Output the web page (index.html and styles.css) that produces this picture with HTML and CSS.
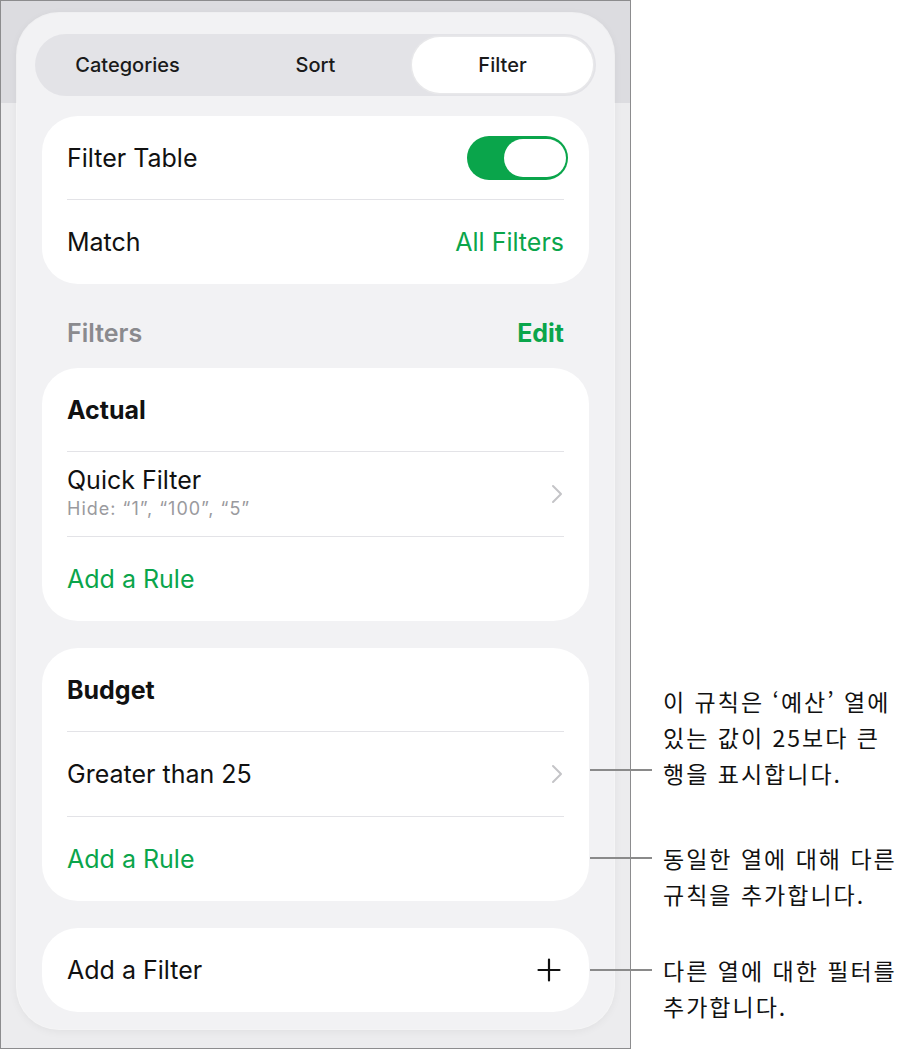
FILE: index.html
```html
<!DOCTYPE html>
<html lang="ko">
<head>
<meta charset="utf-8">
<title>Filter</title>
<link rel="stylesheet" href="styles.css">
</head>
<body>
<div class="stage">
  <div class="frame">
    <div class="backdrop-top"></div>
    <div class="panel">
      <div class="segmented">
        <div class="seg">Categories</div>
        <div class="seg">Sort</div>
        <div class="seg seg-active">Filter</div>
      </div>
      <div class="content">
        <div class="card">
          <div class="row">
            <span class="label">Filter Table</span>
            <span class="toggle"><span class="knob"></span></span>
          </div>
          <div class="divider"></div>
          <div class="row">
            <span class="label">Match</span>
            <span class="value-green">All Filters</span>
          </div>
        </div>

        <div class="section-header">
          <span class="section-title">Filters</span>
          <span class="section-action">Edit</span>
        </div>

        <div class="card">
          <div class="row"><span class="label bold">Actual</span></div>
          <div class="divider"></div>
          <div class="row">
            <div class="stack">
              <span class="label">Quick Filter</span>
              <span class="sub">Hide: “1”, “100”, “5”</span>
            </div>
            <svg class="chevron" width="14" height="20" viewBox="0 0 14 20"><path d="M3 2 L11 10 L3 18" fill="none" stroke="#c4c4c7" stroke-width="2" stroke-linecap="round" stroke-linejoin="round"/></svg>
          </div>
          <div class="divider"></div>
          <div class="row"><span class="label green">Add a Rule</span></div>
        </div>

        <div class="card card-gap">
          <div class="row"><span class="label bold">Budget</span></div>
          <div class="divider"></div>
          <div class="row">
            <span class="label">Greater than 25</span>
            <svg class="chevron" width="14" height="20" viewBox="0 0 14 20"><path d="M3 2 L11 10 L3 18" fill="none" stroke="#c4c4c7" stroke-width="2" stroke-linecap="round" stroke-linejoin="round"/></svg>
          </div>
          <div class="divider"></div>
          <div class="row"><span class="label green">Add a Rule</span></div>
        </div>

        <div class="card card-gap card-single">
          <div class="row">
            <span class="label">Add a Filter</span>
            <svg class="plus" width="24" height="24" viewBox="0 0 24 24"><path d="M12 1.5 V22.5 M1.5 12 H22.5" fill="none" stroke="#111" stroke-width="2.2" stroke-linecap="round"/></svg>
          </div>
        </div>
      </div>
    </div>
  </div>

  <div class="leader leader-1"></div>
  <div class="leader leader-2"></div>
  <div class="leader leader-3"></div>

  <p class="callout callout-1">이 규칙은 ‘예산’ 열에<br>있는 값이 25보다 큰<br>행을 표시합니다.</p>
  <p class="callout callout-2">동일한 열에 대해 다른<br>규칙을 추가합니다.</p>
  <p class="callout callout-3">다른 열에 대한 필터를<br>추가합니다.</p>
</div>
</body>
</html>
```

FILE: styles.css
```css
* { box-sizing: border-box; }

html, body {
  margin: 0;
  padding: 0;
  background: #ffffff;
}

body {
  font-family: Inter, "Noto Sans", "Noto Sans CJK KR", sans-serif;
  color: #111111;
}

.stage {
  position: relative;
  width: 910px;
  height: 1051px;
}

.frame {
  position: relative;
  width: 631px;
  height: 1049px;
  border: 1px solid #8c8c8e;
  background: #ececee;
  padding: 12px 16px 0 16px;
  overflow: hidden;
}

.backdrop-top {
  position: absolute;
  left: 0;
  top: 0;
  right: 0;
  height: 102px;
  background: #dcdce0;
}

.panel {
  position: relative;
  width: 597px;
  height: 1016px;
  background: #f2f2f4;
  border-radius: 42px;
  padding: 21px 18px 0 18px;
  box-shadow: 0 0 0 1px rgba(255,255,255,0.6), 0 2px 10px rgba(0,0,0,0.06);
}

.segmented {
  display: grid;
  grid-template-columns: 1fr 1fr 1fr;
  align-items: center;
  height: 62px;
  padding: 3px;
  background: #e3e3e7;
  border-radius: 31px;
}

.seg {
  text-align: center;
  font-size: 20px;
  font-weight: 500;
  color: #1a1a1a;
  line-height: 56px;
  height: 56px;
}

.seg:first-child {
  padding-right: 6px;
}

.seg-active {
  background: #ffffff;
  border-radius: 28px;
  margin-left: 4px;
  box-shadow: 0 0 0 1.5px #e8e8ea;
}

.content {
  padding: 20px 7px 0 7px;
}

.card {
  background: #ffffff;
  border-radius: 36px;
  padding: 0 25px;
}

.card-gap {
  margin-top: 27px;
}

.row {
  display: flex;
  align-items: center;
  justify-content: space-between;
  height: 84px;
}

.card > .row:first-child {
  height: 83px;
}

.card-single > .row:first-child {
  height: 84px;
}

.divider {
  height: 1px;
  background: #e3e3e7;
}

.label {
  font-size: 25px;
  line-height: 30px;
  color: #111111;
}

.bold {
  font-weight: 700;
}

.green {
  color: #0aa54b;
}

.value-green {
  font-size: 25px;
  color: #0aa54b;
}

.stack {
  display: flex;
  flex-direction: column;
  margin-top: -3px;
}

.sub {
  font-size: 18px;
  line-height: 22px;
  letter-spacing: 1px;
  color: #9a9a9e;
  margin-top: 3px;
}

.chevron {
  display: block;
}

.plus {
  display: block;
  margin-right: 3px;
}

.toggle {
  position: relative;
  width: 101px;
  height: 44px;
  border-radius: 22px;
  background: #0aa54b;
  margin-right: -4px;
}

.knob {
  position: absolute;
  right: 2px;
  top: 3px;
  width: 62px;
  height: 38px;
  border-radius: 19px;
  background: #ffffff;
}

.section-header {
  display: flex;
  justify-content: space-between;
  align-items: flex-start;
  height: 84px;
  padding: 34px 25px 0 25px;
  font-size: 25px;
  line-height: 30px;
  font-weight: 600;
}

.section-title {
  color: #8a8a8e;
}

.section-action {
  color: #0aa54b;
  font-weight: 700;
}

.leader {
  position: absolute;
  left: 590px;
  width: 62px;
  height: 2px;
  background: #8a8a8a;
}

.leader-1 { top: 769px; }
.leader-2 { top: 857px; }
.leader-3 { top: 969px; }

.callout {
  position: absolute;
  left: 663px;
  margin: 0;
  font-family: "Noto Sans CJK KR", "Noto Sans", sans-serif;
  font-size: 23px;
  line-height: 36px;
  letter-spacing: 2px;
  color: #111111;
  white-space: nowrap;
}

.callout-1 { top: 683px; }
.callout-2 { top: 840px; }
.callout-3 { top: 952px; }
```
